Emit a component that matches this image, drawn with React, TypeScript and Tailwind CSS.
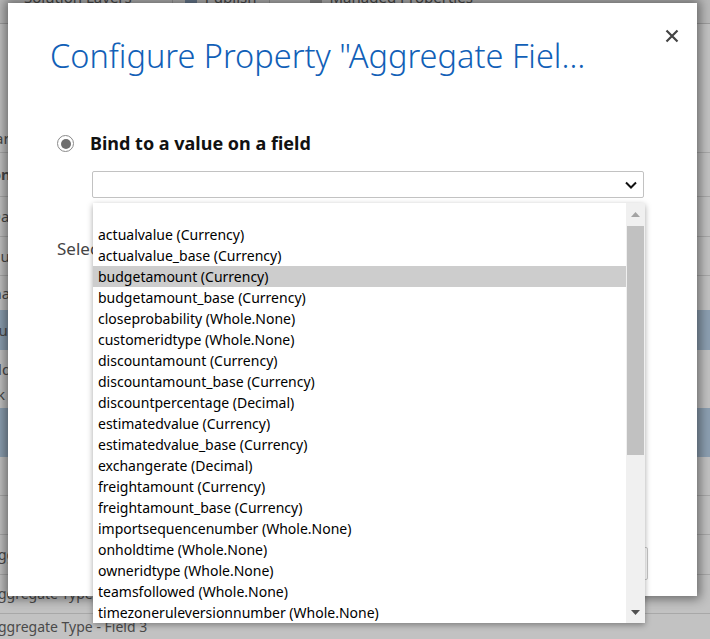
import React from 'react'

const fields = [
    '',
    'actualvalue (Currency)',
    'actualvalue_base (Currency)',
    'budgetamount (Currency)',
    'budgetamount_base (Currency)',
    'closeprobability (Whole.None)',
    'customeridtype (Whole.None)',
    'discountamount (Currency)',
    'discountamount_base (Currency)',
    'discountpercentage (Decimal)',
    'estimatedvalue (Currency)',
    'estimatedvalue_base (Currency)',
    'exchangerate (Decimal)',
    'freightamount (Currency)',
    'freightamount_base (Currency)',
    'importsequencenumber (Whole.None)',
    'onholdtime (Whole.None)',
    'owneridtype (Whole.None)',
    'teamsfollowed (Whole.None)',
    'timezoneruleversionnumber (Whole.None)',
]

const selected = 'budgetamount (Currency)'

const BackgroundPage = () => (
    <div className="flex h-full w-full flex-col text-[15px] text-[#4a4a4a]">
        <div className="flex h-[24px] items-start gap-10 border-b border-[#9c9c9c] bg-[#b9b9b9] pl-6">
            <span className="-mt-[14px]">Solution Layers</span>
            <span className="-mt-[14px] flex items-center gap-2 border-x border-[#9c9c9c] px-3">
                <span className="h-[14px] w-[12px] bg-[#6d7f95]" />
                Publish
            </span>
            <span className="-mt-[14px] flex items-center gap-2">
                <span className="h-[14px] w-[12px] bg-[#8a8a8a]" />
                Managed Properties
            </span>
        </div>
        <div className="h-[101px]" />
        <div className="flex h-[28px] items-center border-b border-[#a8a8a8] -ml-[14px]">Parameters</div>
        <div className="flex h-[44px] items-center border-b border-[#a8a8a8] -ml-[18px] font-bold">Content</div>
        <div className="flex h-[40px] items-center border-b border-[#a8a8a8] -ml-[10px]">Data</div>
        <div className="flex h-[39px] items-center border-b border-[#a8a8a8] -ml-[22px]">Column</div>
        <div className="flex h-[34px] items-center -ml-[26px]">Dynamic</div>
        <div className="flex h-[40px] items-center bg-[#8c9fb1] -ml-[24px]">Column</div>
        <div className="flex h-[30px] items-end -ml-[22px]">Field</div>
        <div className="flex h-[28px] items-center -ml-[24px]">Link</div>
        <div className="h-[49px] bg-[#8c9fb1]" />
        <div className="h-[39px] border-b border-[#a8a8a8]" />
        <div className="h-[39px] border-b border-[#a8a8a8]" />
        <div className="flex h-[40px] items-center border-b border-[#a8a8a8] -ml-[11px] text-[14px]">Aggregate Type - Field 1</div>
        <div className="flex h-[39px] items-end border-b border-[#a8a8a8] -ml-[11px] pb-[9px] text-[14px]">Aggregate Type - Field 2</div>
        <div className="flex h-[25px] items-center -ml-[11px] text-[14px]">Aggregate Type - Field 3</div>
    </div>
)

const Modal = () => (
    <div className="absolute left-[8px] top-[3px] flex h-[593px] w-[689px] flex-col bg-white pl-[42px] pr-[53px] pt-[33px] shadow-[0_0_10px_3px_rgba(0,0,0,0.45)]">
        <div className="flex items-start justify-between">
            <h1 className="text-[32.5px] font-light leading-[40px] text-[#1160b7]">
                Configure Property "Aggregate Fiel…
            </h1>
            <button className="-mr-[35px] -mt-[7px] text-[#444]">
                <svg width="14" height="14" viewBox="0 0 14 14">
                    <path d="M1.5 1.5 L12.5 12.5 M12.5 1.5 L1.5 12.5" stroke="currentColor" strokeWidth="2.2" />
                </svg>
            </button>
        </div>
        <div className="mt-[54px] flex items-center gap-[16px] pl-[7px]">
            <span className="flex h-[17px] w-[17px] items-center justify-center rounded-full border-[1.5px] border-[#8a8a8a]">
                <span className="h-[10px] w-[10px] rounded-full bg-[#6e6e6e]" />
            </span>
            <span className="text-[18px] font-bold text-[#111]">Bind to a value on a field</span>
        </div>
        <div className="ml-[42px] mt-[14px] flex h-[27px] items-center justify-end rounded-[2px] border border-[#c2c2c2] pr-[6px]">
            <svg width="12" height="8" viewBox="0 0 12 8">
                <path d="M1 1.5 L6 6.5 L11 1.5" stroke="#111" strokeWidth="2" fill="none" />
            </svg>
        </div>
        <div className="ml-[7px] mt-[38px] text-[17px] text-[#444]">Select a field</div>
        <div className="mb-[16px] mt-auto flex justify-end">
            <div className="-mr-[4px] h-[33px] w-[96px] rounded-[2px] border border-[#c8c8c8]" />
        </div>
    </div>
)

const DropdownList = () => (
    <div className="absolute left-[93px] top-[203px] flex h-[420px] w-[552px] bg-white shadow-[0_2px_6px_rgba(0,0,0,0.35)]">
        <ul className="flex-1 text-[14px] leading-[21px] text-black">
            {fields.map((f, i) => (
                <li
                    key={i}
                    className={`h-[21px] whitespace-nowrap pl-[5px] ${f === selected ? 'bg-[#cdcdcd]' : ''}`}
                >
                    {f}
                </li>
            ))}
        </ul>
        <div className="flex w-[19px] flex-col bg-[#f0f0f0]">
            <div className="flex h-[23px] items-center justify-center">
                <svg width="9" height="5" viewBox="0 0 9 5">
                    <path d="M0 5 L4.5 0 L9 5 Z" fill="#a3a3a3" />
                </svg>
            </div>
            <div className="mx-[1px] h-[229px] bg-[#c1c1c1]" />
            <div className="flex-1" />
            <div className="flex h-[21px] items-center justify-center">
                <svg width="9" height="5" viewBox="0 0 9 5">
                    <path d="M0 0 L9 0 L4.5 5 Z" fill="#505050" />
                </svg>
            </div>
        </div>
    </div>
)

export default function App() {
    return (
        <div className="relative h-[639px] w-[710px] overflow-hidden bg-[#c2c2c2] font-['Noto_Sans',sans-serif]">
            <BackgroundPage />
            <Modal />
            <DropdownList />
        </div>
    )
}
